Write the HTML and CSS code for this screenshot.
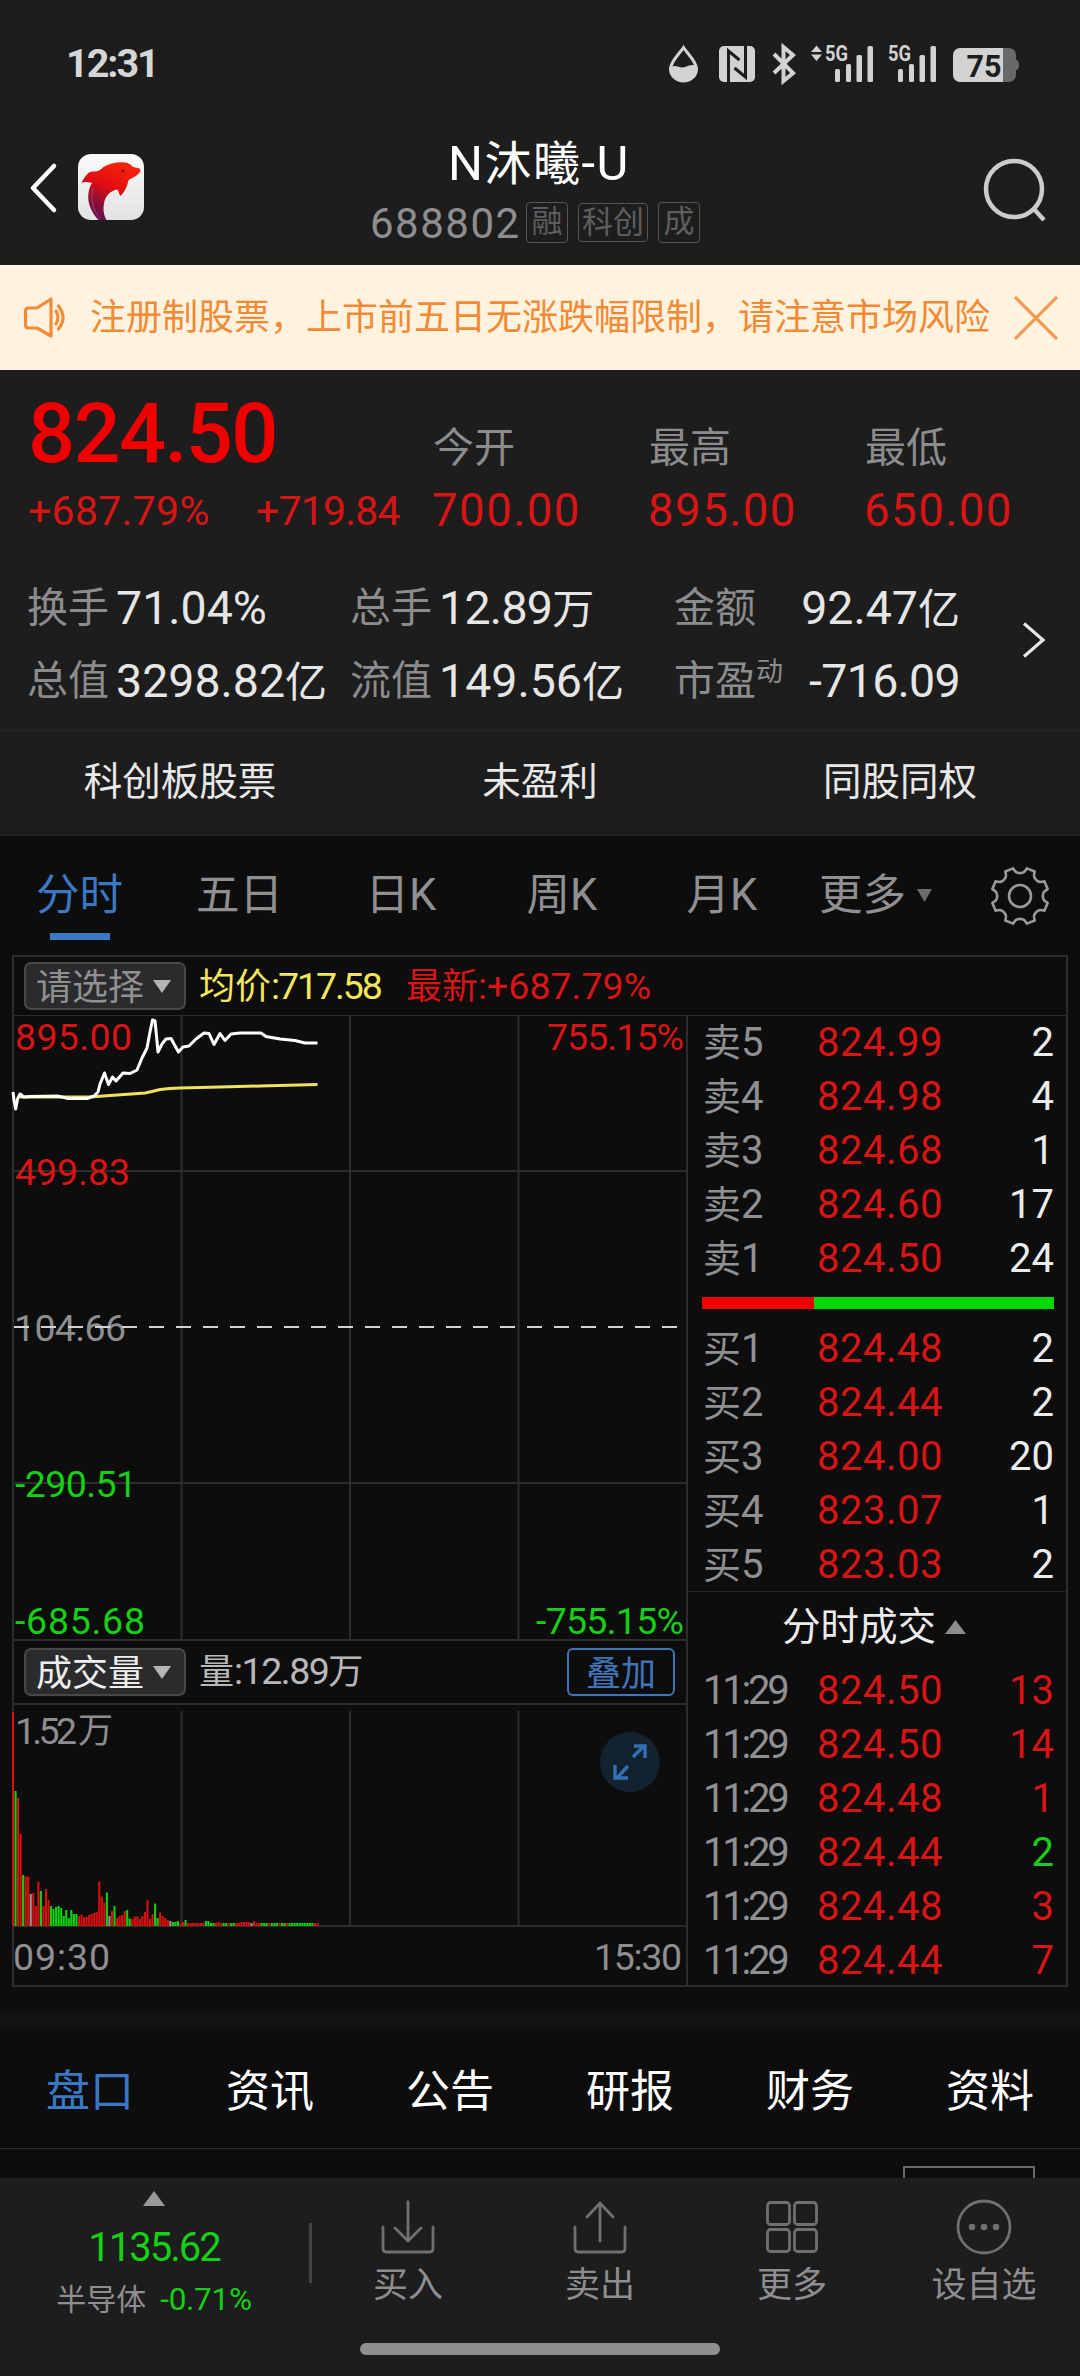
FILE: index.html
```html
<!DOCTYPE html>
<html lang="zh-CN">
<head>
<meta charset="utf-8">
<title>N沐曦-U 688802</title>
<link rel="stylesheet" href="styles.css">
</head>
<body>
<div class="app">
  <div class="status">
    <span class="clock">12:31</span>
    <svg class="status-icons" width="354" height="48" viewBox="666 38 354 48">
      <path d="M683.500 47.500C679 54.500 670.500 61.500 670.500 69a13 12 0 0 0 26 0C696.500 61.500 688 54.500 683.500 47.500z" fill="none" stroke="#d2d2d2" stroke-width="3"/>
      <path d="M671 67c5-3 9 2 14 0s8-3 11-1c1 9-5 15-12.500 15S670 75 671 67z" fill="#d2d2d2"/>
      <rect x="719" y="46" width="36" height="36" rx="5" fill="#d2d2d2"/>
      <path d="M728.500 82V51l11 9M745.500 46v31l-11-9" fill="none" stroke="#1d1d1d" stroke-width="3"/>
      <path d="M774 54l19 19-9.500 8V47l9.500 8-19 18" fill="none" stroke="#d2d2d2" stroke-width="4"/>
      <path d="M811 52l5.500-6.500 5.500 6.500zM811 54.500l5.500 6.500 5.500-6.500z" fill="#d2d2d2"/>
      <text x="825" y="61" class="net" textLength="23" lengthAdjust="spacingAndGlyphs">5G</text>
      <g fill="#d2d2d2">
        <rect x="835" y="69" width="5" height="13" rx="1.500"/><rect x="846" y="64" width="5" height="18" rx="1.500"/><rect x="856.500" y="55" width="5.500" height="27" rx="1.500"/><rect x="867.500" y="46" width="5.500" height="36" rx="1.500"/>
        <rect x="898" y="69" width="5" height="13" rx="1.500"/><rect x="909" y="64" width="5" height="18" rx="1.500"/><rect x="919.500" y="55" width="5.500" height="27" rx="1.500"/><rect x="930.500" y="46" width="5.500" height="36" rx="1.500"/>
      </g>
      <text x="888" y="61" class="net" textLength="23" lengthAdjust="spacingAndGlyphs">5G</text>
      <path d="M1003 48h6a7 7 0 0 1 7 7v5c2 0 3 2 3 5s-1 5-3 5v5a7 7 0 0 1-7 7h-6z" fill="#696969"/>
      <path d="M1003 48v34h-43a7 7 0 0 1-7-7V55a7 7 0 0 1 7-7z" fill="#d2d2d2"/>
      <text x="966.500" y="77" class="battery" textLength="35" lengthAdjust="spacingAndGlyphs">75</text>
    </svg>
  </div>

  <header class="header">
    <svg class="back" width="30" height="52" viewBox="0 0 30 52"><path d="M26 4L5 26l21 22" fill="none" stroke="#fff" stroke-width="4.500" stroke-linecap="round" stroke-linejoin="round"/></svg>
    <svg class="logo" width="66" height="66" viewBox="0 0 66 66">
      <defs>
        <linearGradient id="dolphin" x1=".75" y1="0" x2=".3" y2="1"><stop offset="0" stop-color="#f8260c"/><stop offset=".45" stop-color="#e20d12"/><stop offset=".75" stop-color="#8c0f36"/><stop offset="1" stop-color="#5c1052"/></linearGradient>
        <linearGradient id="tile" x1="0" y1="0" x2="0" y2="1"><stop offset="0" stop-color="#fafafa"/><stop offset="1" stop-color="#e2e2e4"/></linearGradient>
      </defs>
      <rect width="66" height="66" rx="13" fill="url(#tile)"/>
      <path d="M20.500 66C13 58 9 48 10.500 39c.5-4 1.500-7 3.500-10-4-1-7-1.500-10.500-.3C7 22 11 17 15 17.500c4 .5 7-1 10.500-4.500C31 9.500 38 8 45 8.300c5 .2 7.500 2 10 4.700 3 1 7 .5 7.300 3 .4 4-6 7-11 9.500-2.300 3-1 5-3.300 8.500-1.500 3-3 5.500-5.500 8-1.500-2-1.800-4.500-3.200-6.500-7 1-11 6-12.800 11.500C25 52.500 25 60 28.500 66z" fill="url(#dolphin)"/>
      <circle cx="45" cy="17" r="1.500" fill="#7c1010"/>
      <path d="M15 34c-3 11 0 22 7 31" fill="none" stroke="#b8446a" stroke-width=".8"/>
    </svg>
    <div class="heading">
      <h1>N<span class="name">沐曦</span>-U</h1>
      <div class="code-row"><span class="code">688802</span><span class="tag">融</span><span class="tag tag-wide">科创</span><span class="tag">成</span></div>
    </div>
    <svg class="search" width="66" height="68" viewBox="982 156 66 68"><circle cx="1014" cy="189" r="28" fill="none" stroke="#ccc" stroke-width="4.500"/><path d="M1033 208l11 12" stroke="#ccc" stroke-width="4.500" fill="none"/></svg>
  </header>

  <div class="notice">
    <svg width="44" height="44" viewBox="22 296 44 44" fill="none" stroke="#f28c38" stroke-width="3.200" stroke-linejoin="round" stroke-linecap="round"><path d="M51 299v37l-14-8h-8.500q-3 0-3-3v-14q0-3 3-3H37zM56 311q4 6.500 0 13M58.500 306q9 11.500 0 23"/></svg>
    <span class="notice-text">注册制股票，上市前五日无涨跌幅限制，请注意市场风险</span>
    <svg width="44" height="44" viewBox="0 0 44 44"><path d="M1 1l42 42M43 1L1 43" stroke="#f29a50" stroke-width="3.200"/></svg>
  </div>

  <section class="quote">
    <div class="quote-top">
      <div class="last">
        <div class="price">824.50</div>
        <div class="change"><span class="pct">+687.79%</span><span class="diff">+719.84</span></div>
      </div>
      <div class="ohl"><span class="lbl">今开</span><span class="num">700.00</span></div>
      <div class="ohl"><span class="lbl">最高</span><span class="num">895.00</span></div>
      <div class="ohl"><span class="lbl">最低</span><span class="num">650.00</span></div>
    </div>
    <div class="quote-stats">
      <div class="stats">
        <span class="lbl">换手</span><span class="val">71.04%</span>
        <span class="lbl">总手</span><span class="val tight">12.89<i>万</i></span>
        <span class="lbl">金额</span><span class="val end">92.47<i>亿</i></span>
        <span class="lbl">总值</span><span class="val">3298.82<i>亿</i></span>
        <span class="lbl">流值</span><span class="val">149.56<i>亿</i></span>
        <span class="lbl">市盈<sup>动</sup></span><span class="val end tight">-716.09</span>
      </div>
      <svg class="more-arrow" width="24" height="38" viewBox="0 0 24 38"><path d="M2 2.500L21 19 2 35.500" fill="none" stroke="#e6e6e6" stroke-width="3.200"/></svg>
    </div>
  </section>
  <div class="features"><span>科创板股票</span><span>未盈利</span><span>同股同权</span></div>

  <nav class="periods">
    <span class="on">分时</span><span>五日</span><span>日K</span><span>周K</span><span>月K</span>
    <span class="more">更多<svg width="15" height="13" viewBox="0 0 15 13"><path d="M0 0h15L7.500 13z" fill="#6c6c6c"/></svg></span>
    <svg class="gear" width="64" height="64" viewBox="-32 -32 64 64" fill="none" stroke="#9a9a9a" stroke-width="2.600" stroke-linejoin="round"><circle r="11"/><path id="gear-edge"/></svg>
  </nav>

  <section class="panel">
    <div class="panel-head">
      <span class="select dim">请选择<svg width="18" height="13" viewBox="0 0 18 13"><path d="M0 0h18L9 13z" fill="#b4b4b4"/></svg></span>
      <span class="avg">均价<b>:717.58</b></span>
      <span class="latest">最新<b>:+687.79%</b></span>
    </div>
    <div class="panel-body">
      <div class="charts">
        <svg class="price-chart" width="672" height="623" viewBox="14 1016 672 623">
          <path d="M181.500 1016v623M350 1016v623M518.500 1016v623M14 1171h672M14 1483h672" stroke="#2d2d2d" stroke-width="2"/>
          <g class="axis">
            <text class="up" x="15" y="1050" textLength="117">895.00</text>
            <text class="up" x="15" y="1184.500" textLength="115">499.83</text>
            <text class="flat" x="14" y="1340.500" textLength="112">104.66</text>
            <text class="down" x="15" y="1496.500" textLength="122">-290.51</text>
            <text class="down" x="15" y="1633.500" textLength="130">-685.68</text>
            <text class="up" x="547" y="1050" textLength="137">755.15%</text>
            <text class="down" x="536" y="1633.500" textLength="148">-755.15%</text>
          </g>
          <path d="M14 1327H678" stroke="#d4d4d4" stroke-width="2" stroke-dasharray="15 12"/>
          <polyline points="20,1097 90,1097 110,1095.500 145,1093 152,1091.500 160,1089.500 170,1088.500 180,1088 220,1087 260,1086 317.500,1084.500" fill="none" stroke="#efe35e" stroke-width="3"/>
          <polyline points="13,1092 14,1100 15.700,1109 17.500,1099 20,1094 24,1097 30,1096.500 57,1096 62,1097 68,1098.500 87,1098.500 94,1096 98,1092 100,1084 104.500,1073 108.500,1084.500 112.500,1077 116,1081 123,1073 130,1073.500 137,1070 142,1058 147,1048 150,1032 152.500,1020 155,1021 156.500,1036 158,1052 162,1044 166,1039 171,1038.500 174,1044 178.500,1052 183,1047 189,1046 196,1039 204,1033 209,1033.500 214,1044.500 220,1033.500 225,1040.500 231,1034 240,1033 261,1033 266,1036.500 280,1039 295,1040.500 305,1043 317.500,1043" fill="none" stroke="#fff" stroke-width="3" stroke-linejoin="round"/>
        </svg>
        <div class="volume-head">
          <span class="select">成交量<svg width="18" height="13" viewBox="0 0 18 13"><path d="M0 0h18L9 13z" fill="#b4b4b4"/></svg></span>
          <span class="vol">量<b>:12.89</b>万</span>
          <span class="overlay-btn">叠加</span>
        </div>
        <svg class="volume-chart" width="672" height="280" viewBox="14 1705 672 280">
          <path d="M181.500 1711v215M350 1711v215M518.500 1711v215M14 1926h672" stroke="#2d2d2d" stroke-width="2"/>
          <g id="volume-bars" stroke-width="2.100"></g>
          <g class="axis">
            <text class="flat" x="15" y="1744" textLength="62">1.52</text><text class="flat wan" x="78" y="1743">万</text>
            <text class="flat" x="13" y="1970" textLength="97">09:30</text>
            <text class="flat" x="594" y="1970" textLength="88">15:30</text>
          </g>
          <circle cx="630" cy="1762" r="30" fill="#13222f"/>
          <path d="M633 1757l11-11M634 1746h11v12M628 1766l-11 12M615 1765v13h13" fill="none" stroke="#3470b4" stroke-width="3.400"/>
        </svg>
      </div>
      <div class="book">
        <div class="rows">
          <div class="row"><span><i>卖</i>5</span><span>824.99</span><span>2</span></div>
          <div class="row"><span><i>卖</i>4</span><span>824.98</span><span>4</span></div>
          <div class="row"><span><i>卖</i>3</span><span>824.68</span><span>1</span></div>
          <div class="row"><span><i>卖</i>2</span><span>824.60</span><span>17</span></div>
          <div class="row"><span><i>卖</i>1</span><span>824.50</span><span>24</span></div>
        </div>
        <div class="ratio"><span style="width:31.800%"></span></div>
        <div class="rows">
          <div class="row"><span><i>买</i>1</span><span>824.48</span><span>2</span></div>
          <div class="row"><span><i>买</i>2</span><span>824.44</span><span>2</span></div>
          <div class="row"><span><i>买</i>3</span><span>824.00</span><span>20</span></div>
          <div class="row"><span><i>买</i>4</span><span>823.07</span><span>1</span></div>
          <div class="row"><span><i>买</i>5</span><span>823.03</span><span>2</span></div>
        </div>
        <div class="ticks-title">分时成交<svg width="21" height="14" viewBox="0 0 21 14"><path d="M10.500 0L21 14H0z" fill="#8c8c8e"/></svg></div>
        <div class="rows ticks">
          <div class="row"><span>11:29</span><span>824.50</span><span>13</span></div>
          <div class="row"><span>11:29</span><span>824.50</span><span>14</span></div>
          <div class="row"><span>11:29</span><span>824.48</span><span>1</span></div>
          <div class="row"><span>11:29</span><span>824.44</span><span class="sell">2</span></div>
          <div class="row"><span>11:29</span><span>824.48</span><span>3</span></div>
          <div class="row"><span>11:29</span><span>824.44</span><span>7</span></div>
        </div>
      </div>
    </div>
  </section>

  <div class="gap"></div>
  <nav class="info-tabs"><span class="on">盘口</span><span>资讯</span><span>公告</span><span>研报</span><span>财务</span><span>资料</span></nav>
  <div class="peek"><span></span></div>

  <footer class="footer">
    <div class="footer-main">
      <div class="index">
        <svg width="22" height="15" viewBox="0 0 22 15"><path d="M11 0L22 15H0z" fill="#9a9a9c"/></svg>
        <span class="index-value">1135.62</span>
        <span class="index-name">半导体<b>-0.71%</b></span>
      </div>
      <div class="action"><svg width="56" height="56" viewBox="0 0 56 56"><path d="M3 28v22q0 3 3 3h44q3 0 3-3V28M28 3v38M15 29l13 13 13-13"/></svg><span>买入</span></div>
      <div class="action"><svg width="56" height="56" viewBox="0 0 56 56"><path d="M3 28v22q0 3 3 3h44q3 0 3-3V28M28 42V4M15 18L28 4l13 14"/></svg><span>卖出</span></div>
      <div class="action"><svg width="56" height="56" viewBox="0 0 56 56"><rect x="3.500" y="3.500" width="22" height="22" rx="3"/><rect x="30.500" y="3.500" width="22" height="22" rx="3"/><rect x="3.500" y="30.500" width="22" height="22" rx="3"/><rect x="30.500" y="30.500" width="22" height="22" rx="3"/></svg><span>更多</span></div>
      <div class="action"><svg width="56" height="56" viewBox="0 0 56 56"><circle cx="28" cy="28" r="26"/><g fill="#707070" stroke="none"><circle cx="16" cy="28" r="3.300"/><circle cx="28" cy="28" r="3.300"/><circle cx="40" cy="28" r="3.300"/></g></svg><span>设自选</span></div>
    </div>
    <div class="home-bar"></div>
  </footer>
</div>
<script src="chart.js"></script>
</body>
</html>
```
FILE: styles.css
```css
* { box-sizing: border-box; }
body {
  margin: 0;
  background: #0d0d0d;
  font-family: Roboto, "Noto Sans CJK SC", sans-serif;
  line-height: 1.2;
  color: #e6e6e6;
}
i, b { font-style: normal; font-weight: inherit; }
svg { display: block; flex: none; }
.app { width: 1080px; height: 2376px; overflow: hidden; display: flex; flex-direction: column; }
.app > * { flex: none; }

.status { height: 128px; background: #1d1d1d; display: flex; justify-content: space-between; padding: 0 60px 0 66px; }
.clock { font-size: 39.500px; font-weight: 700; line-height: 128px; letter-spacing: -2px; color: #d6d6d6; }
.status-icons { margin-top: 38px; }
.net { font: 700 22px Roboto, sans-serif; fill: #d2d2d2; }
.battery { font: 700 31px Roboto, sans-serif; fill: #1d1d1d; }

.header { height: 137px; background: #1d1d1d; display: flex; align-items: flex-start; padding: 0 32px 0 28px; }
.back { margin-top: 34px; }
.logo { margin: 26px 0 0 20px; }
.heading { width: 340px; margin: 6px 0 0 226px; }
h1 { margin: 0; font-weight: 400; font-size: 49px; line-height: 60px; letter-spacing: 1.500px; color: #fff; text-indent: 78px; white-space: nowrap; }
h1 .name { font-size: 47px; }
.code-row { display: flex; align-items: center; height: 52px; margin-top: 1px; }
.code { font-size: 42px; letter-spacing: 1.500px; color: #8e8e90; width: 156px; flex: none; padding-top: 7px; }
.tag { width: 42px; height: 41px; flex: none; margin-top: 2px; border: 1.500px solid #555; border-radius: 4px; font-size: 31px; line-height: 38px; text-align: center; color: #5e5e5e; margin-right: 10px; }
.tag-wide { width: 70px; height: 39px; line-height: 37px; }
.search { margin: 28px 0 0; margin-left: auto; }

.notice { height: 105px; background: #fff2df; display: flex; align-items: center; gap: 24px; padding: 0 22px; }
.notice-text { width: 900px; font-size: 36px; line-height: 44px; color: #f28a34; white-space: nowrap; }

.quote { height: 361px; background: #1d1d1d; border-bottom: 2px solid #222; }
.quote-top { display: grid; grid-template-columns: 405px 216px 216px 216px; padding: 22px 0 0 28px; }
.last, .ohl { display: flex; flex-direction: column; white-space: nowrap; }
.price { font-size: 83px; font-weight: 500; line-height: 84px; letter-spacing: -1.700px; color: #f00000; }
.change { display: flex; font-size: 41px; line-height: 70px; color: #d81414; }
.pct { width: 228px; letter-spacing: .3px; }
.diff { letter-spacing: -.8px; }
.lbl { font-size: 41px; color: #8c8c8e; }
.ohl .lbl { line-height: 64px; padding-top: 24px; height: 84px; }
.ohl .num { font-size: 45.500px; line-height: 69px; letter-spacing: 1.500px; color: #d81414; margin-left: -1px; }
.quote-stats { display: flex; align-items: center; padding: 26px 0 0 27px; }
.stats { width: 995px; display: grid; grid-template-columns: 89px 234px 89px 235px 90px 196px; grid-auto-rows: 73px; line-height: 73px; white-space: nowrap; }
.val { font-size: 46.500px; color: #e6e6e6; }
.val i { font-size: 42px; }
.tight { letter-spacing: -.7px; }
.end { text-align: right; }
sup { font-size: 27px; vertical-align: 14px; line-height: 0; }
.more-arrow { position: relative; top: -5px; }
.features { height: 105px; background: #1d1d1d; border-bottom: 1px solid #262626; display: grid; grid-template-columns: repeat(3, 1fr); text-align: center; font-size: 38.500px; line-height: 101px; color: #e8e8e8; }

.periods { height: 119px; display: grid; grid-template-columns: 159px 161px 162px 160px 160px 138px 140px; text-align: center; font-size: 43.500px; line-height: 119px; color: #909092; }
.periods span { position: relative; }
.periods .on { color: #3b78c4; }
.on::after { content: ""; position: absolute; left: 50px; top: 97px; width: 60px; height: 7px; background: #3b78c4; }
.info-tabs .on::after { display: none; }
.more { display: flex; align-items: center; gap: 11px; padding-left: 17px; }
.gear { margin: 28px auto 0 48px; }

.panel { margin: 0 12px; height: 1032px; border: 2px solid #2d2d2d; }
.panel-head { height: 59px; border-bottom: 1px solid #2d2d2d; display: flex; align-items: center; padding-left: 10px; font-size: 36px; line-height: 56px; white-space: nowrap; }
.panel-head b, .vol b { font-size: 37.500px; }
.select { width: 162px; height: 48px; border: 2px solid #484848; border-radius: 7px; background: #2b2b2d; display: flex; align-items: center; gap: 9px; padding: 4px 0 0 10px; font-size: 36px; line-height: 44px; color: #eee; }
.select svg { margin-top: -3px; }
.dim { color: #909092; }
.avg { margin-left: 13px; width: 207px; color: #f2e65c; }
.avg b { letter-spacing: -2.100px; }
.latest { color: #d81414; }
.panel-body { display: grid; grid-template-columns: 674px 378px; }
.charts { border-right: 2px solid #2d2d2d; height: 969px; }
.charts > svg { overflow: visible; }
.axis { font-family: Roboto, "Noto Sans CJK SC", sans-serif; font-size: 37.500px; }
.axis .wan { font-size: 35px; }
.up { fill: #d81414; }
.down { fill: #16cf16; }
.flat { fill: #8e8e90; }
.volume-head { height: 66px; border: solid #2d2d2d; border-width: 2px 0; display: flex; align-items: center; padding: 0 11px 0 10px; font-size: 35px; line-height: 60px; white-space: nowrap; }
.vol { margin-left: 13px; color: #b8b8ba; }
.vol b { letter-spacing: -1.500px; }
.overlay-btn { width: 108px; height: 48px; margin-left: auto; border: 2px solid #3f75b8; border-radius: 6px; color: #3f75b8; text-align: center; line-height: 49px; }

.rows { font-size: 40px; line-height: 54px; }
.row { display: grid; grid-template-columns: 114px 130px 1fr; padding: 0 12px 0 15px; white-space: nowrap; color: #909092; }
.row i { font-size: 38px; }
.row span:nth-child(2) { color: #d81414; letter-spacing: .5px; }
.row span:nth-child(3) { color: #ececec; text-align: right; }
.ticks .row span:first-child { letter-spacing: -3.200px; }
.ticks .row span:nth-child(3) { color: #d81414; }
.ticks .row span.sell { color: #16cf16; }
.ratio { height: 12px; margin: 11px 12px 13px 14px; background: #00d800; display: flex; }
.ratio span { background: #ee0000; }
.ticks-title { height: 73px; margin-top: -1px; border-top: 1px solid #222; display: flex; align-items: center; justify-content: center; gap: 9px; font-size: 38.500px; line-height: 68px; color: #ececec; padding: 0 6px 2px 0; }

.gap { height: 18px; margin-top: 24px; background: #121212; }
.info-tabs { height: 120px; border-bottom: 1px solid #2c2c2c; display: grid; grid-template-columns: repeat(6, 1fr); text-align: center; font-size: 44px; line-height: 127px; color: #fff; }
.info-tabs .on { color: #3b78c4; }
.peek { height: 29px; padding: 17px 45px 0 0; display: flex; justify-content: flex-end; }
.peek span { width: 132px; border: 2px solid #6a6a6a; border-bottom: 0; }

.footer { height: 198px; background: #1d1d1d; }
.footer-main { height: 165px; display: grid; grid-template-columns: 312px repeat(4, 192px); }
.index { display: flex; flex-direction: column; align-items: center; padding: 13px 4px 0 0; background: linear-gradient(#444, #444) right 45px / 3px 60px no-repeat; }
.index-value { font-size: 40px; line-height: 48px; margin-top: 18px; letter-spacing: -2px; color: #16cf16; }
.index-name { font-size: 30px; line-height: 40px; margin-top: 8px; color: #8e8e90; }
.index-name b { font-size: 31.500px; margin-left: 14px; letter-spacing: -.3px; color: #16cf16; }
.action { display: flex; flex-direction: column; align-items: center; padding-top: 21px; font-size: 35px; line-height: 44px; color: #8e8e90; }
.action svg { fill: none; stroke: #707070; stroke-width: 2.800px; stroke-linecap: round; stroke-linejoin: round; margin-bottom: 9px; }
.home-bar { width: 360px; height: 12px; margin: 0 auto; border-radius: 6px; background: #8e8e8e; }
```
FILE: chart.js
```js
// Minute volume: r = up, g = down, w = unchanged, followed by the bar height.
const volume = ("r214 g135 r128 r92 g51 r49.5 r49.5 w32 r33 r20 r44 g35 r20 r37 r26 g20 g17 g19 g20 g18 g10 g16 g8 g16 g12 g12 " +
  "r10 r11.5 r9 r9 r11 r12 r13 r14 r44.5 r29.5 r23.5 g33.5 w10 r15 g20 r8 r10 r11 r15 g16 g7.5 r7 r9.5 r9.5 r7 r10 r14 r26 r7 r12 " +
  "g22.5 g8 r13.5 r10 r8 r6 w5 g4 g4 g5 r3 r4 g6 r3 r3 r3 r3 r3 r3 r3 g5 g5 g3 g3 r3 r4 r3 g3 g3 r3 g3 g3 r3 r3 r4 r4 r4 r4 w3 r5 r3 r3 " +
  "g3 g3 g3 r3 g3 g3 g3 r3 g3 g3 r3 g3 g3 g3 g3 g3 g3 g3 g3 g3 g3 r3 r3").split(" ");
const colors = { r: "#d80f0f", g: "#0fd00f", w: "#a89090" };
const step = (317.5 - 13) / (volume.length - 1);
const paths = { r: "", g: "", w: "" };
volume.forEach((v, i) => {
  paths[v[0]] += `M${(13 + i * step).toFixed(2)} 1926v-${v.slice(1)}`;
});
document.getElementById("volume-bars").innerHTML =
  Object.keys(paths).map(k => `<path d="${paths[k]}" stroke="${colors[k]}"/>`).join("");

// Gear outline: eight teeth separated by round notches.
let d = "";
const at = (r, deg) => {
  const a = deg * Math.PI / 180;
  return `${(r * Math.cos(a)).toFixed(2)} ${(r * Math.sin(a)).toFixed(2)}`;
};
for (let k = 0; k < 8; k++) {
  const c = k * 45;
  d += `${k ? "L" : "M"}${at(28.5, c - 14)}Q${at(24, c - 11)} ${at(23.3, c - 6)}Q${at(22.5, c)} ${at(23.3, c + 6)}Q${at(24, c + 11)} ${at(28.5, c + 14)}`;
}
document.getElementById("gear-edge").setAttribute("d", d + "Z");
```
